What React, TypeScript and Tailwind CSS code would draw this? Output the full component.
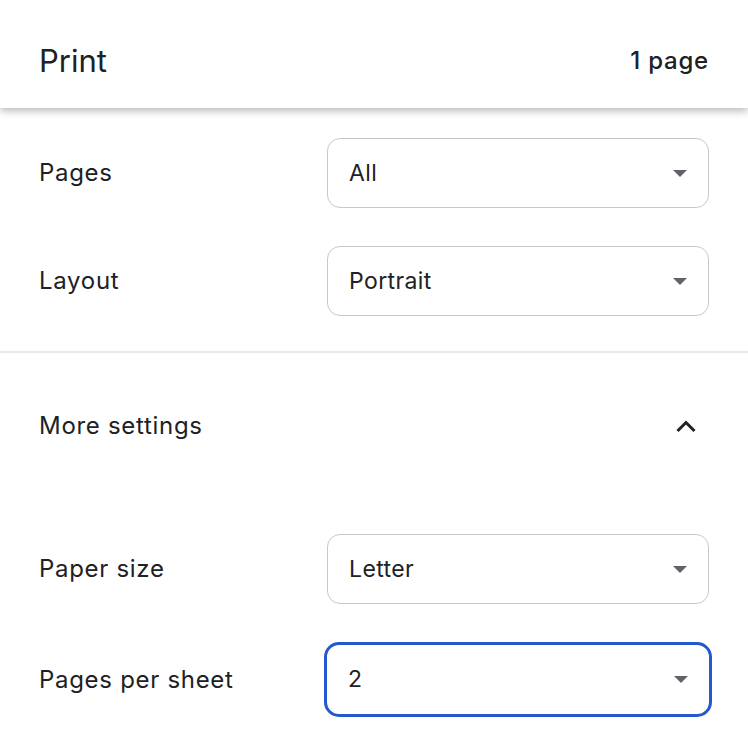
import React from "react";

const font = { fontFamily: 'Inter, "Noto Sans", "Liberation Sans", sans-serif' };

function Caret() {
  return (
    <svg width="14" height="7" viewBox="0 0 14 7" className="shrink-0">
      <path d="M0 0 L14 0 L7 7 Z" fill="#5f6368" />
    </svg>
  );
}

function Select({ value, focused }: { value: string; focused?: boolean }) {
  if (focused) {
    return (
      <div className="w-[388px] h-[75px] -mr-[3px] rounded-[15px] border-[3.5px] border-[#2458d0] bg-white flex items-center justify-between pl-[21px] pr-[21px]">
        <span className="text-[23px] tracking-[0.4px] text-[#202124]">{value}</span>
        <Caret />
      </div>
    );
  }
  return (
    <div className="w-[382px] h-[70px] rounded-[13px] border-[1.5px] border-[#c8c8c8] bg-white flex items-center justify-between pl-[21px] pr-[21px]">
      <span className="text-[23px] tracking-[0.4px] text-[#202124]">{value}</span>
      <Caret />
    </div>
  );
}

function Row({ label, children }: { label: string; children: React.ReactNode }) {
  return (
    <div className="flex items-center justify-between">
      <span className="text-[24px] tracking-[0.7px] text-[#202124]">{label}</span>
      {children}
    </div>
  );
}

export default function App() {
  return (
    <div className="w-[748px] h-[744px] bg-white overflow-hidden" style={font}>
      <div className="relative z-10 h-[108px] px-[39px] pt-[14px] flex items-center justify-between bg-white shadow-[0_3px_8px_rgba(0,0,0,0.28)]">
        <span className="text-[31px] text-[#202124]">Print</span>
        <span className="text-[24px] font-medium tracking-[0.8px] text-[#202124]">1 page</span>
      </div>
      <div className="px-[39px] pt-[30px] flex flex-col gap-[38px]">
        <Row label="Pages">
          <Select value="All" />
        </Row>
        <Row label="Layout">
          <Select value="Portrait" />
        </Row>
      </div>
      <div className="mt-[35px] h-[2px] bg-[#e8e8ed]" />
      <div className="h-[146px] px-[39px] flex items-center justify-between">
        <span className="text-[24px] tracking-[0.7px] text-[#202124]">More settings</span>
        <svg width="22" height="14" viewBox="0 0 22 14" className="mr-[12px]">
          <path d="M2.5 12 L11 3.5 L19.5 12" fill="none" stroke="#202124" strokeWidth="3" />
        </svg>
      </div>
      <div className="px-[39px] pt-[35px] flex flex-col gap-[38px]">
        <Row label="Paper size">
          <Select value="Letter" />
        </Row>
        <Row label="Pages per sheet">
          <Select value="2" focused />
        </Row>
      </div>
    </div>
  );
}
